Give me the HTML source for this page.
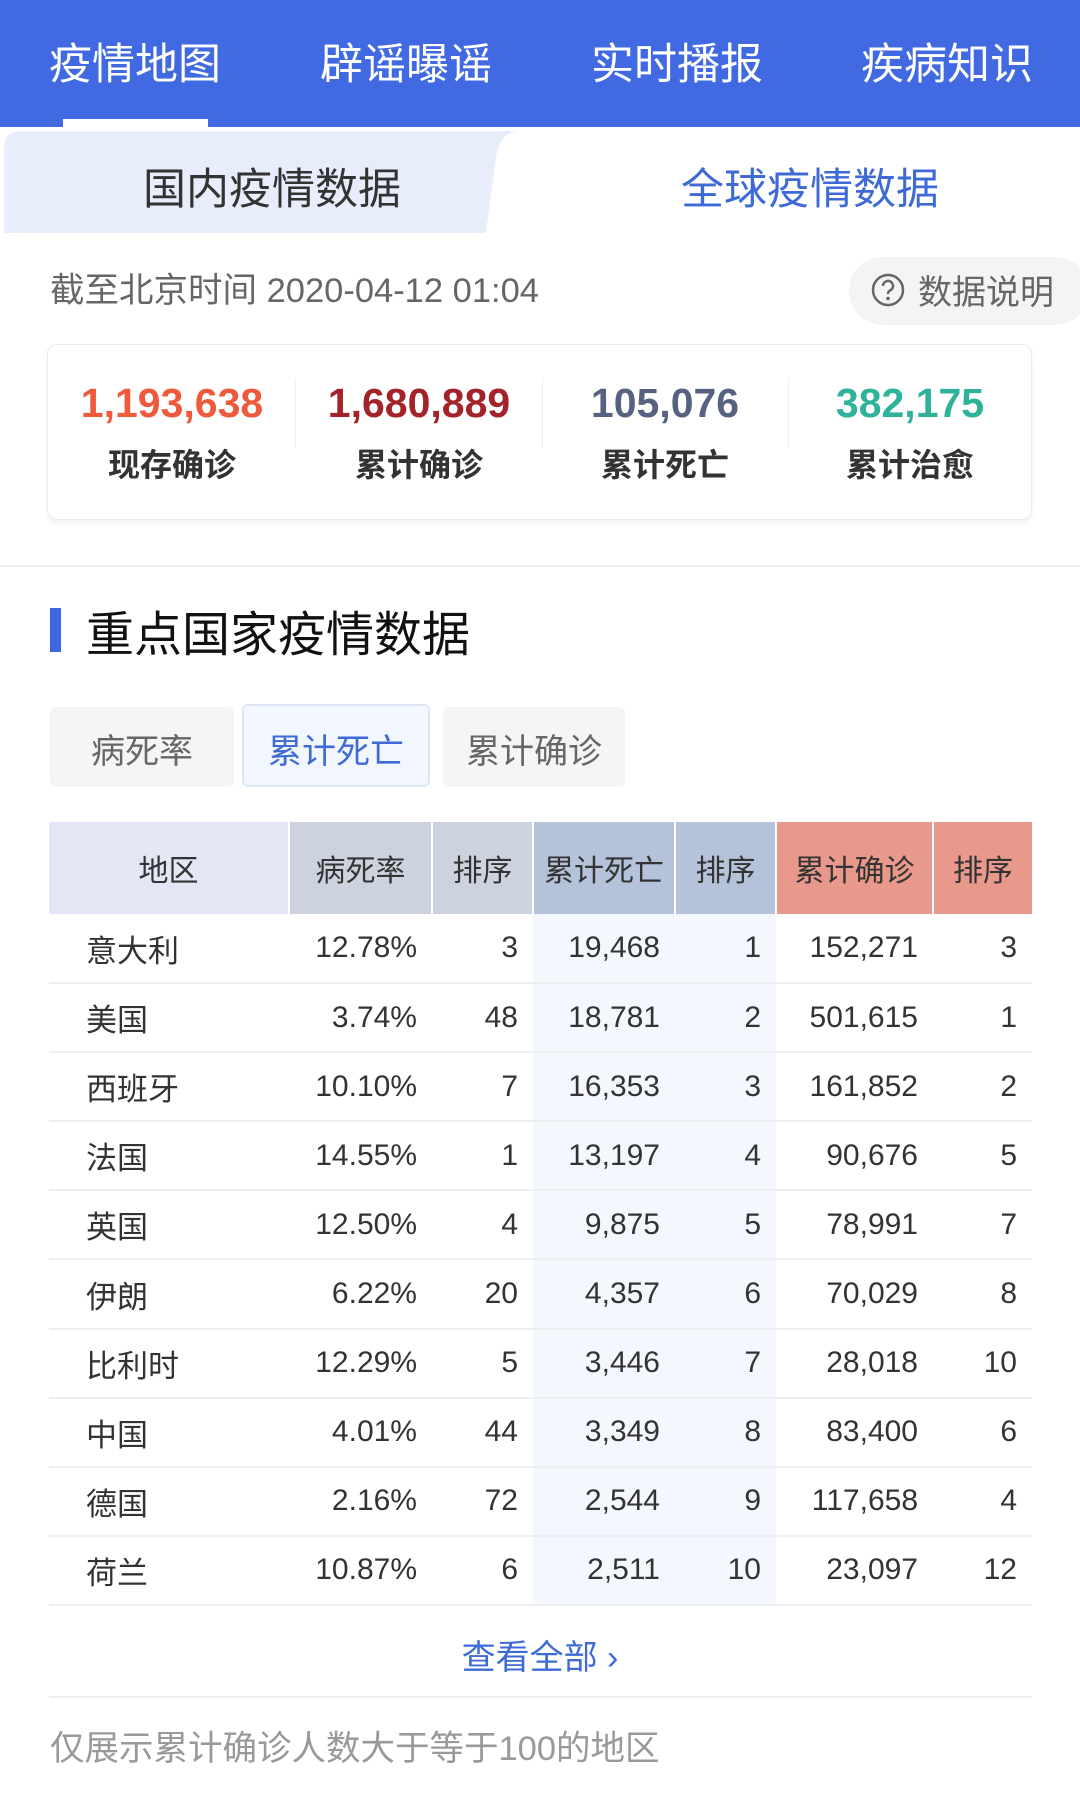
<!DOCTYPE html>
<html><head><meta charset="utf-8"><style>
*{margin:0;padding:0;box-sizing:border-box}
body{width:1080px;height:1800px;background:#fff;font-family:"Liberation Sans","Noto Sans CJK SC",sans-serif;position:relative;overflow:hidden;color:#333}
.a{position:absolute;white-space:nowrap}
.hdr{left:0;top:0;width:1080px;height:127px;background:#4169e1}
.ht{color:#fff;font-size:43px;top:30px;transform:translateX(-50%)}
.c{transform:translateX(-50%)}
table{position:absolute;left:49px;top:822px;width:983px;border-collapse:collapse;font-size:30px}
th{font-weight:normal;height:92px;color:#333;border-right:2px solid #fff}
td{height:69.1px;border-bottom:2px solid #eceef2;text-align:right;color:#333;padding-right:15px}
td:first-child{text-align:left;padding-left:37px;font-size:31px}
.lb{background:#f4f7fd}
</style></head><body>
<div class="a hdr"></div>
<div class="a ht" style="left:135px">疫情地图</div>
<div class="a ht" style="left:406px">辟谣曝谣</div>
<div class="a ht" style="left:677px">实时播报</div>
<div class="a ht" style="left:947px">疾病知识</div>
<div class="a" style="left:63px;top:119px;width:145px;height:8px;background:#fff"></div>
<svg class="a" style="left:0;top:127px" width="1080" height="106"><path d="M4 106 V22 Q4 4 22 4 H520 Q500 4 496 30 L486 106 Z" fill="#e7edfb"/></svg>
<div class="a c" style="left:272px;top:155px;font-size:43px;color:#333">国内疫情数据</div>
<div class="a c" style="left:810px;top:155px;font-size:43px;color:#3d6ad6">全球疫情数据</div>
<div class="a" style="left:50px;top:262px;font-size:34.5px;color:#666">截至北京时间 2020-04-12 01:04</div>
<div class="a" style="left:849px;top:257px;width:240px;height:68px;background:#f4f4f4;border-radius:34px"></div>
<svg class="a" style="left:870px;top:272px" width="36" height="36"><circle cx="18" cy="18" r="15" fill="none" stroke="#666" stroke-width="2.5"/><path d="M13 14a5 5 0 1 1 7 4.5c-1.5.8-2 1.5-2 3.5" fill="none" stroke="#666" stroke-width="2.5"/><circle cx="18" cy="26.5" r="1.8" fill="#666"/></svg>
<div class="a" style="left:918px;top:265px;font-size:34px;color:#666">数据说明</div>
<div class="a" style="left:47px;top:344px;width:985px;height:176px;border:1px solid #ececec;border-radius:10px;box-shadow:0 3px 6px rgba(0,0,0,.06)"></div>
<div class="a" style="left:295px;top:378px;width:1px;height:70px;background:#eee"></div>
<div class="a" style="left:542px;top:378px;width:1px;height:70px;background:#eee"></div>
<div class="a" style="left:788px;top:378px;width:1px;height:70px;background:#eee"></div>
<div class="a c" style="left:172px;top:380px;font-size:41px;font-weight:bold;color:#f05a3c">1,193,638</div>
<div class="a c" style="left:419px;top:380px;font-size:41px;font-weight:bold;color:#a3232b">1,680,889</div>
<div class="a c" style="left:665px;top:380px;font-size:41px;font-weight:bold;color:#56627f">105,076</div>
<div class="a c" style="left:910px;top:380px;font-size:41px;font-weight:bold;color:#2fb29a">382,175</div>
<div class="a c" style="left:172px;top:440px;font-size:32px;font-weight:bold">现存确诊</div>
<div class="a c" style="left:419px;top:440px;font-size:32px;font-weight:bold">累计确诊</div>
<div class="a c" style="left:665px;top:440px;font-size:32px;font-weight:bold">累计死亡</div>
<div class="a c" style="left:910px;top:440px;font-size:32px;font-weight:bold">累计治愈</div>
<div class="a" style="left:0;top:565px;width:1080px;height:2px;background:#f0f0f0"></div>
<div class="a" style="left:50px;top:608px;width:11px;height:44px;background:#3d66e0"></div>
<div class="a" style="left:86px;top:595px;font-size:48px;color:#111">重点国家疫情数据</div>
<div class="a" style="left:50px;top:707px;width:184px;height:80px;background:#f5f5f5;border-radius:6px"></div>
<div class="a" style="left:242px;top:704px;width:188px;height:83px;background:#f2f6fe;border:2px solid #dce5f6;border-radius:6px"></div>
<div class="a" style="left:443px;top:707px;width:182px;height:80px;background:#f5f5f5;border-radius:6px"></div>
<div class="a c" style="left:142px;top:724px;font-size:34px;color:#666">病死率</div>
<div class="a c" style="left:336px;top:724px;font-size:34px;color:#3d6ad6">累计死亡</div>
<div class="a c" style="left:534px;top:724px;font-size:34px;color:#666">累计确诊</div>
<table>
<colgroup><col style="width:240px"><col style="width:143px"><col style="width:101px"><col style="width:142px"><col style="width:101px"><col style="width:157px"><col style="width:99px"></colgroup>
<tr><th style="background:#e3e6f5">地区</th><th style="background:#cdd3de">病死率</th><th style="background:#cdd3de">排序</th><th style="background:#b4c3da">累计死亡</th><th style="background:#b4c3da">排序</th><th style="background:#e8998b">累计确诊</th><th style="background:#e8998b;border-right:0">排序</th></tr>
<tr><td>意大利</td><td>12.78%</td><td>3</td><td class="lb">19,468</td><td class="lb">1</td><td>152,271</td><td>3</td></tr>
<tr><td>美国</td><td>3.74%</td><td>48</td><td class="lb">18,781</td><td class="lb">2</td><td>501,615</td><td>1</td></tr>
<tr><td>西班牙</td><td>10.10%</td><td>7</td><td class="lb">16,353</td><td class="lb">3</td><td>161,852</td><td>2</td></tr>
<tr><td>法国</td><td>14.55%</td><td>1</td><td class="lb">13,197</td><td class="lb">4</td><td>90,676</td><td>5</td></tr>
<tr><td>英国</td><td>12.50%</td><td>4</td><td class="lb">9,875</td><td class="lb">5</td><td>78,991</td><td>7</td></tr>
<tr><td>伊朗</td><td>6.22%</td><td>20</td><td class="lb">4,357</td><td class="lb">6</td><td>70,029</td><td>8</td></tr>
<tr><td>比利时</td><td>12.29%</td><td>5</td><td class="lb">3,446</td><td class="lb">7</td><td>28,018</td><td>10</td></tr>
<tr><td>中国</td><td>4.01%</td><td>44</td><td class="lb">3,349</td><td class="lb">8</td><td>83,400</td><td>6</td></tr>
<tr><td>德国</td><td>2.16%</td><td>72</td><td class="lb">2,544</td><td class="lb">9</td><td>117,658</td><td>4</td></tr>
<tr><td>荷兰</td><td>10.87%</td><td>6</td><td class="lb">2,511</td><td class="lb">10</td><td>23,097</td><td>12</td></tr>
</table>
<div class="a c" style="left:540px;top:1630px;font-size:34px;color:#3d6ad6">查看全部 ›</div>
<div class="a" style="left:49px;top:1696px;width:983px;height:2px;background:#eee"></div>
<div class="a" style="left:50px;top:1720px;font-size:34.5px;color:#999">仅展示累计确诊人数大于等于100的地区</div>
</body></html>
